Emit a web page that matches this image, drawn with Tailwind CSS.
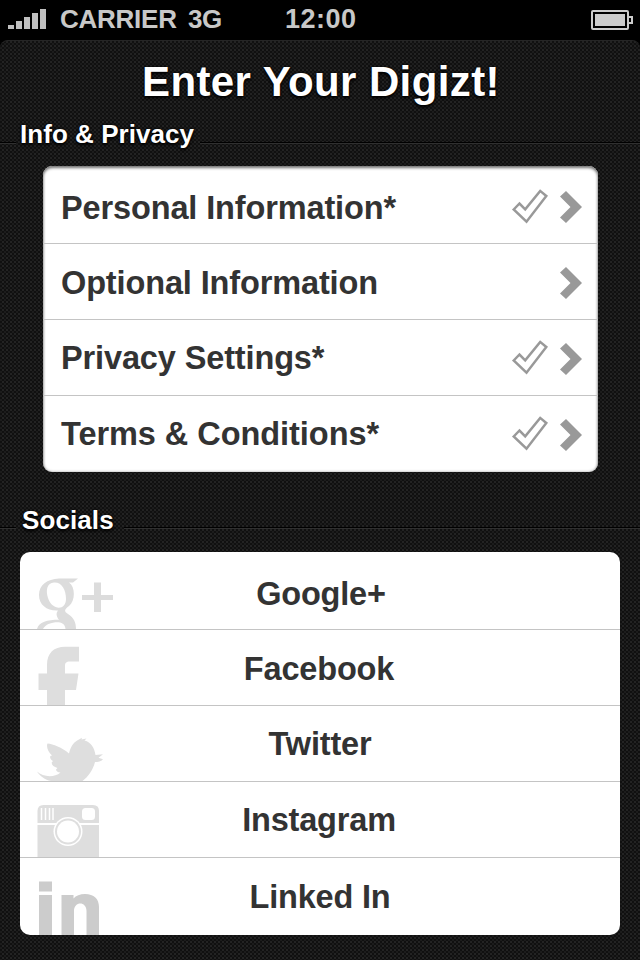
<!DOCTYPE html>
<html lang="en">
<head>
<meta charset="utf-8">
<title>Enter Your Digizt!</title>
<script src="https://cdn.jsdelivr.net/npm/@tailwindcss/browser@4"></script>
</head>
<body class="w-[640px] h-[960px] overflow-hidden bg-black font-['Liberation_Sans',Arial,sans-serif] font-bold">
<svg class="hidden">
  <symbol id="check" viewBox="0 0 38 36"><path d="M2.700 20.500 8.500 14.500 14.200 20.300 29.200 1.900 35.300 7 15.500 32.700Z" fill="none" stroke="#999" stroke-width="2.500"/></symbol>
  <symbol id="chevron" viewBox="0 0 24 34"><path d="M1 6.500 7 1 23 17 7 33 1 27.500 11.500 17Z" fill="#999"/></symbol>
</svg>
<header class="h-10 bg-black flex items-center text-[#c8c8c8] text-[26px] leading-10">
  <div class="flex items-end gap-[2px] ml-2 h-5 mt-[-2px]">
    <i class="w-[6px] h-1 bg-[#c0c0c0]"></i><i class="w-[6px] h-2 bg-[#c0c0c0]"></i><i class="w-[6px] h-3 bg-[#c0c0c0]"></i><i class="w-[6px] h-4 bg-[#c0c0c0]"></i><i class="w-[6px] h-5 bg-[#c0c0c0]"></i>
  </div>
  <span class="ml-[14px] -mt-[2px] w-[128px] tracking-[-0.25px]">CARRIER</span><span class="-mt-[2px] w-[97px] tracking-[-0.4px]">3G</span><span class="-mt-[2px] text-[27px] tracking-[0.5px]">12:00</span>
  <svg class="ml-auto mr-[6px]" width="43" height="20" viewBox="0 0 43 20"><rect x="1" y="1" width="36" height="18" rx="1" fill="none" stroke="#ccc" stroke-width="2"/><path d="M4 4h30v12H4z" fill="#ccc"/><path d="M38 7h3v6h-3" fill="none" stroke="#ccc" stroke-width="2"/></svg>
</header>
<main class="h-[920px] rounded-t-[8px] flex flex-col bg-[conic-gradient(#232323_25%,#101010_0_50%,#1c1c1c_0_75%,#101010_0)] bg-[size:4px_4px] border-t border-[#252525]">
  <div class="h-[79px] pt-[16px] text-center text-white text-[42px] leading-[50px] [text-shadow:0_2px_3px_#000,0_0_3px_#000] tracking-[0.4px]"><h1 class="pl-[2px]">Enter Your Digizt!</h1></div>
  <div class="flex h-[46px] text-white text-[26px] leading-[30px] [text-shadow:0_2px_3px_#000,0_0_3px_#000]">
    <div class="w-4 h-px bg-black mt-[22px] shadow-[0_1px_0_#303030]"></div>
    <h2 class="ml-[4px] -mt-[1px] w-[180px] whitespace-nowrap tracking-[0.04px]">Info &amp; Privacy</h2>
    <div class="flex-1 h-px bg-black mt-[22px] shadow-[0_1px_0_#303030]"></div>
  </div>
  <section class="ml-[43px] w-[555px] h-[306px] rounded-[9px] bg-white text-[#333] text-[32.5px] tracking-[-0.13px] leading-[72px] shadow-[inset_0_2px_3px_#777,inset_0_0_3px_#aaa]">
    <div class="h-[78px] pt-[5px] pl-[18px] pr-[15px] flex items-center border-b border-[#c4c4c4]"><span class="pt-[2px]">Personal Information*</span><svg class="ml-auto w-[38px] h-9"><use href="#check"/></svg><svg class="ml-[10px] w-6 h-[34px]"><use href="#chevron"/></svg></div>
    <div class="h-[76px] pt-[2px] pl-[18px] pr-[15px] flex items-center border-b border-[#c4c4c4]"><span>Optional Information</span><svg class="ml-auto w-6 h-[34px]"><use href="#chevron"/></svg></div>
    <div class="h-[76px] pt-[2px] pl-[18px] pr-[15px] flex items-center border-b border-[#c4c4c4]"><span class="pb-[2px]">Privacy Settings*</span><svg class="ml-auto mb-[2px] w-[38px] h-9"><use href="#check"/></svg><svg class="ml-[10px] w-6 h-[34px]"><use href="#chevron"/></svg></div>
    <div class="h-[76px] pt-[2px] pl-[18px] pr-[15px] flex items-center"><span class="pb-[2px] tracking-[-0.05px]">Terms &amp; Conditions*</span><svg class="ml-auto mb-[2px] w-[38px] h-9"><use href="#check"/></svg><svg class="ml-[10px] w-6 h-[34px]"><use href="#chevron"/></svg></div>
  </section>
  <div class="flex h-[80px] pt-[33px] text-white text-[26px] leading-[30px] [text-shadow:0_2px_3px_#000,0_0_3px_#000]">
    <div class="w-4 h-px bg-black mt-[22px] shadow-[0_1px_0_#303030]"></div>
    <h2 class="ml-[6px] w-[102px] tracking-[0.1px]">Socials</h2>
    <div class="flex-1 h-px bg-black mt-[22px] shadow-[0_1px_0_#303030]"></div>
  </div>
  <section class="ml-5 w-[600px] h-[383px] rounded-[10px] bg-white overflow-hidden text-[#333] text-[32.5px] tracking-[-0.18px] text-center leading-[76px]">
    <div class="relative h-[78px] pt-[4px] pl-[2px] border-b border-[#c4c4c4]">Google+
      <svg class="absolute left-[17px] bottom-0" width="78" height="52" viewBox="37 577 78 52" fill="#dcdcdc"><path fill-rule="evenodd" d="M59 578.500H78L73 582.500H69C75.500 587 75.500 601 69 606 64 609.500 64 611.500 68 614 74 617.500 76 623 76 629H65.500C65 623 60 621.800 54 622.500 48 623.500 45 625.500 43 629H37C39 622 47 619.800 59 619.800 56 616 56 613 58 610.500 47 611 39 605 39 595 39 585 47 579 59 578.500ZM54 582.500C47 583 45.500 590 48 598 52 610.500 66 611 66 599 66 590 62 582 54 582.500Z"/><path d="M94 582.500h7v12.500h12v5h-12v12h-7v-12H82v-5h12Z"/></svg></div>
    <div class="relative h-[76px] pt-[1px] pr-[2px] border-b border-[#c4c4c4]">Facebook
      <svg class="absolute left-[17px] bottom-0" width="45" height="60" viewBox="37 645 45 60" fill="#dedede"><path d="M47 705V690H38.500V673.500H47V665C47 653 54 646.800 65 646.800H79V661.500H70C66 661.500 65 663 65 666V673.500H78.500L76 690H65V705Z"/></svg></div>
    <div class="relative h-[76px] border-b border-[#c4c4c4]">Twitter
      <svg class="absolute left-[17px] bottom-0" width="68" height="45" viewBox="37 736 68 45" fill="#dedede"><path d="M37 771.500C43 777 54 778 60.500 772.500 57.500 772.500 56 771 56 769.500L57.500 768C54 767 51.500 765 51.700 762.500L53 761C50.500 759.500 49.500 757.500 50.500 756L52 755.500C48 752 46 746 47.500 743.500 53 744 62 747.500 69 753.500 71 745 75 741.500 78.500 739.800L82 737.800 81.500 739.500 86.500 738.500 84.500 740.500C91 742 94.500 748 95.500 755L103 754.200 98.500 757.800 103 759.200C101 761.500 98 762 95 762 93 770 88 777 82.500 781H51C45 780 40 776 37 771.500Z"/></svg></div>
    <div class="relative h-[76px] pr-[2px] border-b border-[#c4c4c4]">Instagram
      <svg class="absolute left-[17px] bottom-0" width="62" height="52" viewBox="37 805 62 52"><path fill="#dedede" d="M37.500 857V811q0-6 6-6H93q6 0 6 6v46Z"/><path d="M37 824H99" stroke="#fff" stroke-width="2"/><path d="M41.500 808v12M45.500 808v12M49.500 808v12M53 808v12" stroke="#fff" stroke-width="1.500"/><rect x="82" y="808" width="13" height="12" rx="3.500" fill="#fff"/><circle cx="68" cy="831.500" r="14.500" fill="#fff"/><circle cx="68" cy="831.500" r="13" fill="#dedede"/><circle cx="68" cy="831.500" r="11" fill="#fff"/></svg></div>
    <div class="relative h-[77px] pt-px">Linked In
      <svg class="absolute left-[17px] bottom-0" width="64" height="54" viewBox="37 881 64 54" fill="#ccc"><path d="M39 881.500h13v10H39zM39 895h13v40H39zM61.500 895H73.500V898.500C76 895.500 80 894 85 894 94 894 99 899 99 907V935H86.500V911C86.500 901 74 901 74 911V935H61.500Z"/></svg></div>
  </section>
</main>
</body>
</html>
